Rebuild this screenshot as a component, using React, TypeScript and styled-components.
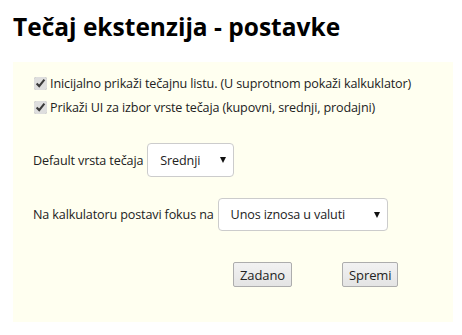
import React from "react";
import styled, { createGlobalStyle } from "styled-components";

const Global = createGlobalStyle`
  html, body { margin: 0; padding: 0; background: #ffffff; }
  body { font-family: "Open Sans", "Noto Sans", sans-serif; color: #222; }
`;

const Page = styled.div`
  padding: 11px 9px 0 13px;
`;

const Title = styled.h1`
  margin: 0 0 19px 0;
  font-size: 24.5px;
  line-height: 32px;
  font-weight: 700;
  color: #000;
  white-space: nowrap;
`;

const Panel = styled.div`
  background: #fffff0;
  padding: 9px 20px 35px 20px;
  font-size: 12.6px;
  letter-spacing: -0.14px;
  display: flex;
  flex-direction: column;
`;

const CheckRow = styled.label`
  display: flex;
  align-items: center;
  height: 24px;
  white-space: nowrap;
`;

const Check = styled.input`
  width: 13px;
  height: 13px;
  margin: 0 3px 0 1px;
  accent-color: #dedede;
`;

const FieldRow = styled.div<{ $top: number }>`
  display: flex;
  align-items: baseline;
  margin-top: ${(p) => p.$top}px;
  white-space: nowrap;
`;

const Label = styled.span`
  margin-right: 4px;
`;

const SelectWrap = styled.span`
  position: relative;
  display: inline-block;
`;

const Select = styled.select<{ $w: number; $h: number }>`
  appearance: none;
  -webkit-appearance: none;
  width: ${(p) => p.$w}px;
  height: ${(p) => p.$h}px;
  padding: 0 20px 0 12px;
  border: 1px solid #cccccc;
  border-radius: 4px;
  background: #ffffff;
  font-family: inherit;
  font-size: 12.6px;
  letter-spacing: -0.14px;
  color: #222;
  outline: none;
`;

const Arrow = styled.span`
  position: absolute;
  right: 8px;
  top: 50%;
  margin-top: -3px;
  width: 0;
  height: 0;
  border-left: 3.5px solid transparent;
  border-right: 3.5px solid transparent;
  border-top: 6px solid #111;
  pointer-events: none;
`;

const ButtonRow = styled.div`
  display: flex;
  gap: 50px;
  margin-top: 31px;
  padding-left: 200px;
`;

const Button = styled.button`
  height: 25px;
  padding: 0 6px;
  border: 1px solid #adadad;
  border-radius: 2px;
  background: linear-gradient(#f2f2f2, #e4e4e4);
  font-family: inherit;
  font-size: 13px;
  letter-spacing: -0.1px;
  color: #222;
`;

export default function App() {
  return (
    <>
      <Global />
      <Page>
        <Title>Tečaj ekstenzija - postavke</Title>
        <Panel>
          <CheckRow>
            <Check type="checkbox" defaultChecked />
            Inicijalno prikaži tečajnu listu. (U suprotnom pokaži kalkuklator)
          </CheckRow>
          <CheckRow>
            <Check type="checkbox" defaultChecked />
            Prikaži UI za izbor vrste tečaja (kupovni, srednji, prodajni)
          </CheckRow>
          <FieldRow $top={24}>
            <Label>Default vrsta tečaja</Label>
            <SelectWrap>
              <Select $w={87} $h={34} defaultValue="srednji">
                <option value="kupovni">Kupovni</option>
                <option value="srednji">Srednji</option>
                <option value="prodajni">Prodajni</option>
              </Select>
              <Arrow />
            </SelectWrap>
          </FieldRow>
          <FieldRow $top={21}>
            <Label>Na kalkulatoru postavi fokus na</Label>
            <SelectWrap>
              <Select $w={170} $h={33} defaultValue="valuta">
                <option value="valuta">Unos iznosa u valuti</option>
                <option value="kune">Unos iznosa u kunama</option>
              </Select>
              <Arrow />
            </SelectWrap>
          </FieldRow>
          <ButtonRow>
            <Button>Zadano</Button>
            <Button>Spremi</Button>
          </ButtonRow>
        </Panel>
      </Page>
    </>
  );
}
